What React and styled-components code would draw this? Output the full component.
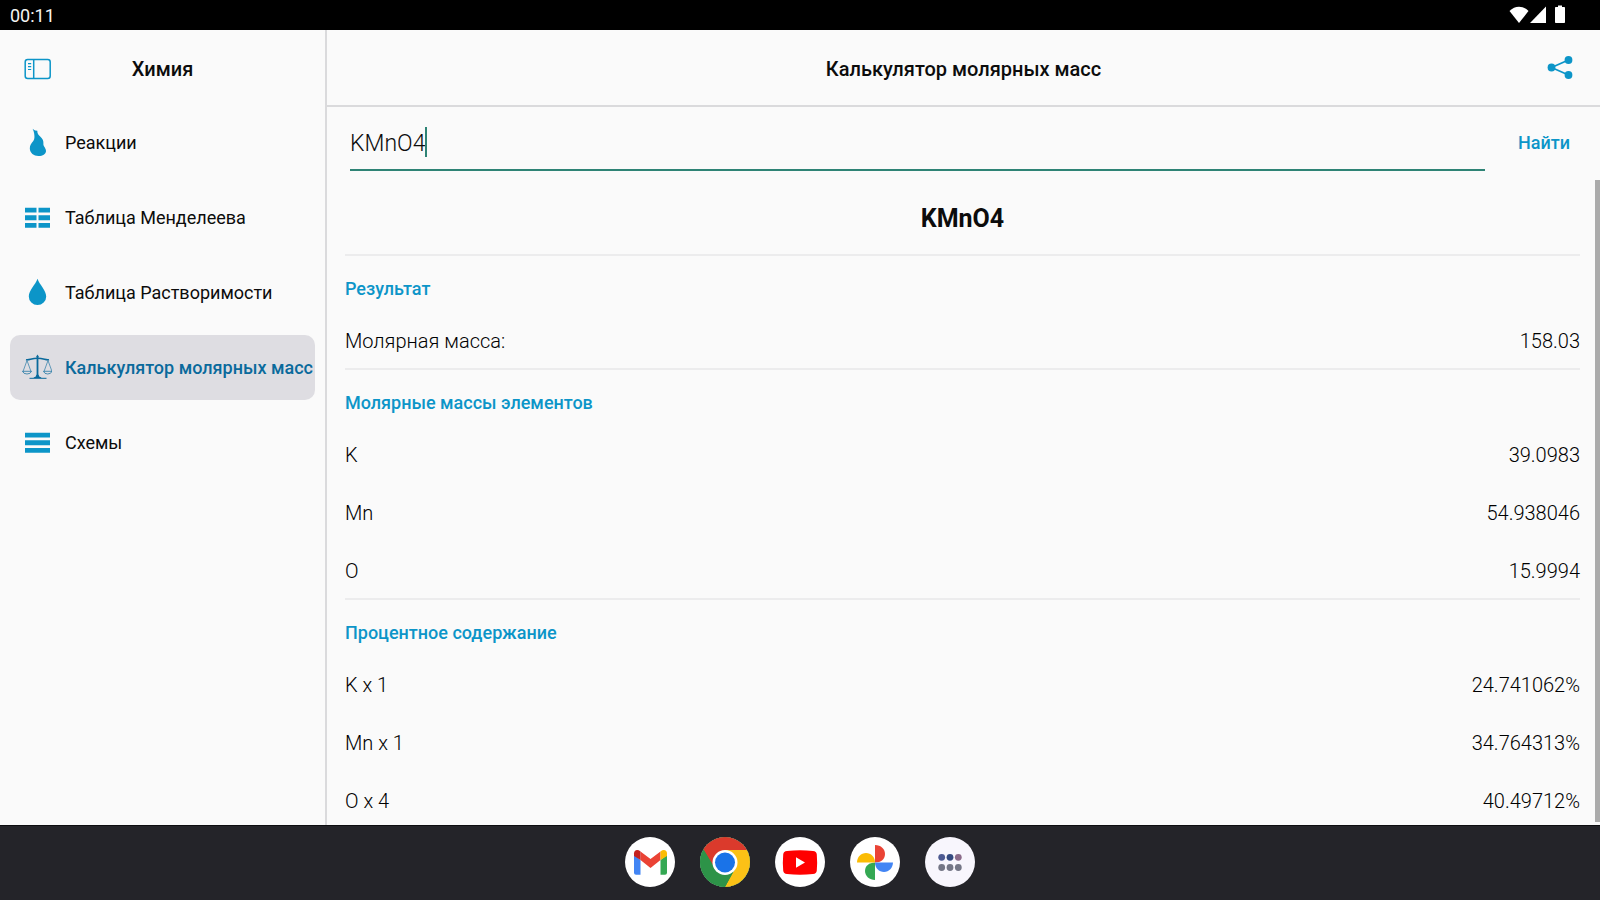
import React, { useState } from "react";
import styled, { createGlobalStyle } from "styled-components";

const color = {
  surface: "#fafafa",
  accent: "#0c95c8",
  accentDark: "#0a6a9c",
  selected: "#dedde2",
  field: "#2e8375",
  divider: "#dadadc",
  hairline: "#ececed",
  dock: "#242429",
};

const GlobalStyle = createGlobalStyle`
  * { box-sizing: border-box; }
  body { margin: 0; font-family: Roboto, "Noto Sans", sans-serif; color: #0c0c0c; background: ${color.surface}; }
  button, input { font: inherit; color: inherit; border: 0; background: none; padding: 0; margin: 0; outline: 0; }
  button { cursor: pointer; }
  h1, h2, h3, ul, dl, dd { margin: 0; padding: 0; }
  svg { display: block; }
`;

const Screen = styled.div`
  height: 100vh;
  display: flex;
  flex-direction: column;
`;

const StatusBar = styled.header`
  flex: none;
  height: 30px;
  padding: 0 34px 0 10px;
  display: flex;
  align-items: center;
  justify-content: space-between;
  background: #000;
  color: #f4f4f4;
  font-size: 18px;
`;

const Body = styled.div`
  flex: 1;
  min-height: 0;
  display: flex;
`;

const Sidebar = styled.aside`
  flex: none;
  width: 327px;
  border-right: 2px solid ${color.divider};
`;

const SidebarHeader = styled.div`
  height: 80px;
  padding: 0 24px 2px;
  display: grid;
  grid-template-columns: 28px 1fr 28px;
  align-items: center;
`;

const BarTitle = styled.h1`
  font-size: 20px;
  line-height: 24px;
  font-weight: 500;
  text-align: center;
`;

const IconButton = styled.button`
  display: grid;
  place-items: center;
  color: ${color.accent};
`;

const NavList = styled.ul`
  list-style: none;
  padding: 0 10px;
  display: flex;
  flex-direction: column;
  gap: 10px;
`;

const NavLink = styled.a`
  height: 65px;
  padding-left: 12px;
  border-radius: 10px;
  display: flex;
  align-items: center;
  gap: 13px;
  text-decoration: none;
  white-space: nowrap;
  font-size: 18px;
  font-weight: ${(p) => (p.$active ? 500 : 400)};
  color: ${(p) => (p.$active ? color.accentDark : "#0c0c0c")};
  background: ${(p) => (p.$active ? color.selected : "transparent")};

  svg {
    flex: none;
    color: ${(p) => (p.$active ? color.accentDark : color.accent)};
  }
`;

const Main = styled.main`
  flex: 1;
  min-width: 0;
  position: relative;
  display: flex;
  flex-direction: column;
`;

const TopBar = styled.div`
  flex: none;
  height: 77px;
  padding: 2px 26px 0;
  display: grid;
  grid-template-columns: 28px 1fr 28px;
  align-items: center;
  border-bottom: 2px solid ${color.divider};

  h1 { grid-column: 2; }
`;

const SearchForm = styled.form`
  flex: none;
  height: 73px;
  padding: 0 30px 0 23px;
  display: flex;
  align-items: flex-start;
  gap: 33px;
`;

const Field = styled.label`
  flex: 1;
  height: 64px;
  padding-top: 8px;
  display: flex;
  align-items: center;
  border-bottom: 2px solid ${color.field};
`;

const FieldInput = styled.input`
  field-sizing: content;
  padding-top: 3px;
  font-size: 23px;
  line-height: 30px;
  font-weight: 300;
  caret-color: transparent;
`;

const Caret = styled.span`
  width: 2px;
  height: 30px;
  background: ${color.field};
`;

const FindButton = styled.button`
  height: 71px;
  font-size: 18px;
  font-weight: 500;
  color: ${color.accent};
`;

const Results = styled.div`
  flex: 1;
  min-height: 0;
  padding: 0 20px 0 18px;
  overflow-y: auto;
  scrollbar-width: none;
`;

const Formula = styled.h2`
  height: 74px;
  font-size: 25px;
  line-height: 77px;
  font-weight: 700;
  text-align: center;
`;

const Section = styled.section`
  border-top: 2px solid ${color.hairline};
`;

const SectionTitle = styled.h3`
  padding: 22px 0 10px;
  font-size: 18px;
  line-height: 22px;
  font-weight: 500;
  color: ${color.accent};
`;

const Row = styled.div`
  height: 58px;
  padding-top: 3px;
  display: flex;
  align-items: center;
  justify-content: space-between;
  font-size: 20px;
  font-weight: 300;
  color: #000;
`;

const ScrollThumb = styled.div`
  position: absolute;
  right: 0;
  top: 150px;
  bottom: 3px;
  width: 5px;
  background: #ababab;
`;

const Dock = styled.nav`
  flex: none;
  height: 75px;
  box-shadow: inset 0 1px #0d0d10;
  padding-bottom: 1px;
  display: flex;
  align-items: center;
  justify-content: center;
  gap: 25px;
  background: ${color.dock};
`;

const AppButton = styled.button`
  width: 50px;
  height: 50px;
  border-radius: 50%;
  overflow: hidden;
  background: ${(p) => p.$tint || "#fff"};
`;

const StatusIcons = () => (
  <svg width="57" height="20" viewBox="0 0 57 20" fill="#fff" aria-hidden="true">
    <path d="M.5 6C6 .2 14 .2 19.500 6L10 18z" />
    <path d="M37 1.500V18H21z" />
    <path d="M49 .5h4v1.500h2.200q.8 0 .8.800v14.400q0 .8-.8.800h-8.400q-.8 0-.8-.800V2.800q0-.8.800-.800H49z" />
  </svg>
);

const PanelIcon = () => (
  <svg width="28" height="22" viewBox="0 0 28 22" fill="none" stroke="currentColor" strokeWidth="1.500" aria-hidden="true">
    <rect x="1.200" y="1.500" width="25" height="19" rx="2.500" />
    <path d="M9.700 1.500v19" />
    <path d="M4 5.700h3.200M4 8.600h3.200M4 11.500h3.200" strokeWidth="1.200" />
  </svg>
);

const FlaskIcon = () => (
  <svg width="30" height="30" viewBox="0 0 30 30" fill="currentColor" aria-hidden="true">
    <path d="M10.600 .8l1.600 1.100 1.100.7 2 .2.200 1.900c.5 2 2.500 3.500 4.300 5.600 1.700 2 1.700 3.600 1.600 6.200.1 2.200 2.800 3.800 2.600 6.700-.3 3.200-3.500 4.800-7.600 4.700-4.600 0-8.500-3-8.600-7.500 0-3 1.400-5.400 3.500-7.500 1.600-2.200 1.200-4.700.8-7.600-.2-1.500-.8-2.900-1.500-4.500z" />
  </svg>
);

const GridIcon = () => (
  <svg width="30" height="30" viewBox="0 0 30 30" fill="currentColor" aria-hidden="true">
    <path d="M3 4.700h11.500v4.700H3zM16.500 4.700H28v4.700H16.500zM3 12.300h11.500v4.900H3zM16.500 12.300H28v4.900H16.500zM3 20h11.500v4.700H3zM16.500 20H28v4.700H16.500z" />
  </svg>
);

const DropIcon = () => (
  <svg width="30" height="30" viewBox="0 0 30 30" fill="currentColor" aria-hidden="true">
    <path d="M15.500 .8C17.500 6.800 24.200 12.300 24.200 18.500A8.700 8.600 0 0 1 6.800 18.500C6.800 12.300 13.500 6.800 15.500 .8z" />
  </svg>
);

const ScalesIcon = () => (
  <svg width="30" height="30" viewBox="0 0 30 30" fill="none" stroke="currentColor" aria-hidden="true">
    <path d="M15.500 5v19" strokeWidth="1.800" />
    <path d="M15.500 1.500l1.400 2.200-1.400 2.300-1.400-2.300zM11.500 25q.2-1 2-1.200l1-2h2l1 2q1.800.2 2 1.200z" fill="currentColor" stroke="none" />
    <path d="M7.500 25.300h17" strokeWidth="1" />
    <path d="M4 6.600c3 1 5-1.400 11.500-1.400s8.500 2.400 11.500 1.400" strokeWidth="1.500" />
    <path d="M5 7.500L1 18.500M5 7.500l4 11M26 7.500l-4 11M26 7.500l4 11" strokeWidth=".6" />
    <path d="M.5 18.300h9q-1 2.700-4.500 2.700T.5 18.300zM21.500 18.300h8.500q-1 2.700-4.300 2.700t-4.200-2.700z" strokeWidth=".7" />
  </svg>
);

const BarsIcon = () => (
  <svg width="30" height="30" viewBox="0 0 30 30" fill="currentColor" aria-hidden="true">
    <path d="M3 4.700h25v4.700H3zM3 12.300h25v4.900H3zM3 20h25v4.700H3z" />
  </svg>
);

const ShareIcon = () => (
  <svg width="28" height="28" viewBox="0 0 28 28" fill="currentColor" aria-hidden="true">
    <path d="M5.500 12.500l17-7.500M5.500 12.500l17 7.500" stroke="currentColor" strokeWidth="1.800" />
    <circle cx="5.500" cy="12.500" r="3.900" />
    <circle cx="22.500" cy="5" r="3.900" />
    <circle cx="22.500" cy="20" r="3.900" />
  </svg>
);

const GmailIcon = () => (
  <svg width="50" height="50" viewBox="0 0 50 50" aria-hidden="true">
    <path d="M9 18l6.500 5v14.700H11q-2 0-2-2z" fill="#4285f4" />
    <path d="M42 18l-6.500 5v14.700H40q2 0 2-2z" fill="#34a853" />
    <path d="M15.500 14.500l10 7.500 10-7.500V23l-10 8-10-8z" fill="#ea4335" />
    <path d="M9 19v-2.500c0-3.500 3.500-4.500 6.500-2V23z" fill="#c5221f" />
    <path d="M42 19v-2.500c0-3.500-3.500-4.500-6.500-2V23z" fill="#fbbc04" />
  </svg>
);

const ChromeIcon = () => (
  <svg width="50" height="50" viewBox="0 0 50 50" aria-hidden="true">
    <rect width="50" height="50" fill="#2d9348" />
    <path d="M25 25L3.300 12.500V0H50v13H25z" fill="#db3a2c" />
    <path d="M25 13h25v37H25l10.400-19z" fill="#fbc116" />
    <path d="M0 8l3.300 4.500 11.300 18.500L25 25V13H4L3.300 0z" fill="#db3a2c" />
    <path d="M0 8h1l13.600 23L25 37l10.400-6L25 50H0z" fill="#2d9348" />
    <circle cx="25" cy="25.500" r="12.500" fill="#fff" />
    <circle cx="25" cy="25.500" r="10" fill="#1a73e8" />
  </svg>
);

const YoutubeIcon = () => (
  <svg width="50" height="50" viewBox="0 0 50 50" aria-hidden="true">
    <path d="M12 14q13-1.500 26 0 3.500.4 3.800 3.500.7 8 0 16-.3 3.100-3.800 3.500-13 1.500-26 0-3.500-.4-3.800-3.500-.7-8 0-16 .3-3.100 3.800-3.500z" fill="#f00" />
    <path d="M21 20.200v10.600l9-5.300z" fill="#fff" />
  </svg>
);

const PhotosIcon = () => (
  <svg width="50" height="50" viewBox="0 0 50 50" aria-hidden="true">
    <path d="M25 8c6 0 10 4 10 9s-4 8.500-10 8.500z" fill="#ea4335" />
    <path d="M43 25.500c0 5-4 9.500-9 9.500s-9-4-9-9.500z" fill="#4285f4" />
    <path d="M25 43c-5.500 0-10-4-10-9s4-8.500 10-8.500z" fill="#34a853" />
    <path d="M7 25.500c0-5.500 4-9.500 9-9.500s9 4 9 9.500z" fill="#fbbc04" />
  </svg>
);

const DrawerIcon = () => (
  <svg width="50" height="50" viewBox="0 0 50 50" aria-hidden="true">
    <circle cx="16.700" cy="20.300" r="3.400" fill="#4d5a92" />
    <circle cx="25" cy="20.300" r="3.400" fill="#344a80" />
    <circle cx="33.300" cy="20.300" r="3.400" fill="#8b6b8a" />
    <circle cx="16.700" cy="30.500" r="3.400" fill="#747686" />
    <circle cx="25" cy="30.500" r="3.400" fill="#747686" />
    <circle cx="33.300" cy="30.500" r="3.400" fill="#747686" />
  </svg>
);

const navItems = [
  { label: "Реакции", Icon: FlaskIcon },
  { label: "Таблица Менделеева", Icon: GridIcon },
  { label: "Таблица Растворимости", Icon: DropIcon },
  { label: "Калькулятор молярных масс", Icon: ScalesIcon, active: true },
  { label: "Схемы", Icon: BarsIcon },
];

const sections = [
  { title: "Результат", rows: [["Молярная масса:", "158.03"]] },
  {
    title: "Молярные массы элементов",
    rows: [["K", "39.0983"], ["Mn", "54.938046"], ["O", "15.9994"]],
  },
  {
    title: "Процентное содержание",
    rows: [["K x 1", "24.741062%"], ["Mn x 1", "34.764313%"], ["O x 4", "40.49712%"]],
  },
];

const apps = [
  { name: "Gmail", Icon: GmailIcon },
  { name: "Chrome", Icon: ChromeIcon },
  { name: "YouTube", Icon: YoutubeIcon },
  { name: "Google Photos", Icon: PhotosIcon },
  { name: "Apps", Icon: DrawerIcon, tint: "#f8f6fd" },
];

export default function App() {
  const [formula, setFormula] = useState("KMnO4");

  return (
    <Screen>
      <GlobalStyle />
      <StatusBar>
        <span>00:11</span>
        <StatusIcons />
      </StatusBar>
      <Body>
        <Sidebar>
          <SidebarHeader>
            <IconButton type="button" aria-label="Панель">
              <PanelIcon />
            </IconButton>
            <BarTitle as="h2">Химия</BarTitle>
          </SidebarHeader>
          <nav>
            <NavList>
              {navItems.map(({ label, Icon, active }) => (
                <li key={label}>
                  <NavLink href="#" $active={active} aria-current={active ? "page" : undefined}>
                    <Icon />
                    {label}
                  </NavLink>
                </li>
              ))}
            </NavList>
          </nav>
        </Sidebar>
        <Main>
          <TopBar>
            <BarTitle>Калькулятор молярных масс</BarTitle>
            <IconButton type="button" aria-label="Поделиться">
              <ShareIcon />
            </IconButton>
          </TopBar>
          <SearchForm onSubmit={(e) => e.preventDefault()}>
            <Field>
              <FieldInput
                type="text"
                aria-label="Формула"
                value={formula}
                onChange={(e) => setFormula(e.target.value)}
              />
              <Caret />
            </Field>
            <FindButton type="submit">Найти</FindButton>
          </SearchForm>
          <Results>
            <Formula>KMnO4</Formula>
            {sections.map(({ title, rows }) => (
              <Section key={title}>
                <SectionTitle>{title}</SectionTitle>
                <dl>
                  {rows.map(([name, value]) => (
                    <Row key={name}>
                      <dt>{name}</dt>
                      <dd>{value}</dd>
                    </Row>
                  ))}
                </dl>
              </Section>
            ))}
          </Results>
          <ScrollThumb />
        </Main>
      </Body>
      <Dock>
        {apps.map(({ name, Icon, tint }) => (
          <AppButton key={name} type="button" aria-label={name} $tint={tint}>
            <Icon />
          </AppButton>
        ))}
      </Dock>
    </Screen>
  );
}
